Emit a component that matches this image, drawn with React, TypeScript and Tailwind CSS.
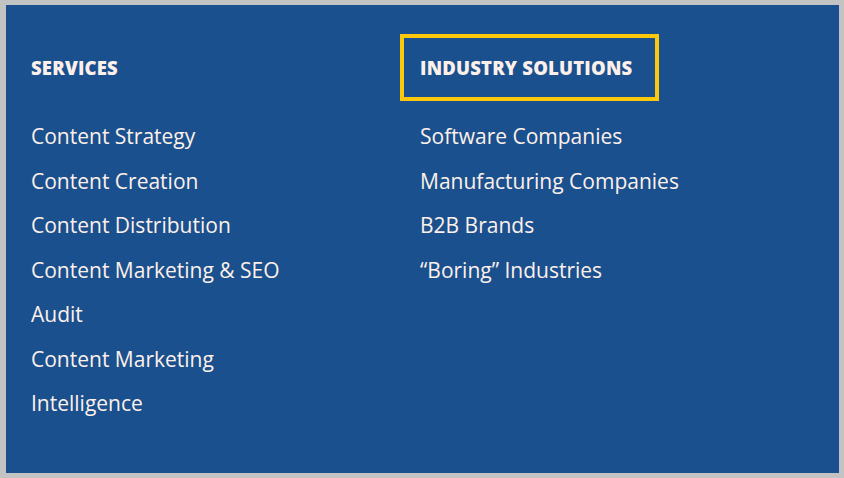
const services = [
  "Content Strategy",
  "Content Creation",
  "Content Distribution",
  "Content Marketing & SEO",
  "Audit",
  "Content Marketing",
  "Intelligence",
];

const industries = [
  "Software Companies",
  "Manufacturing Companies",
  "B2B Brands",
  "\u201CBoring\u201D Industries",
];

function Column({
  title,
  items,
  highlight,
}: {
  title: string;
  items: string[];
  highlight?: boolean;
}) {
  return (
    <div>
      <h3 className="relative text-[18.5px] font-extrabold uppercase leading-[24px] tracking-[0.01em]">
        {highlight && (
          <span
            aria-hidden
            className="absolute -left-[20px] -top-[22px] h-[67px] w-[259px] border-4 border-[#fcc80c]"
          />
        )}
        {title}
      </h3>
      <ul className="mt-[34px] text-[21px] leading-[44.5px]">
        {items.map((item) => (
          <li key={item}>{item}</li>
        ))}
      </ul>
    </div>
  );
}

export default function App() {
  return (
    <div className="h-[478px] w-[844px] border-[5px] border-l-[6px] border-[#c3c3c3] bg-[#1a508e]">
      <div
        className="grid h-full grid-cols-[389px_1fr] pl-[25px] pt-[51px] text-[#fdf0ea]"
        style={{ fontFamily: "'Open Sans', 'Noto Sans', sans-serif" }}
      >
        <Column title="Services" items={services} />
        <Column title="Industry Solutions" items={industries} highlight />
      </div>
    </div>
  );
}
